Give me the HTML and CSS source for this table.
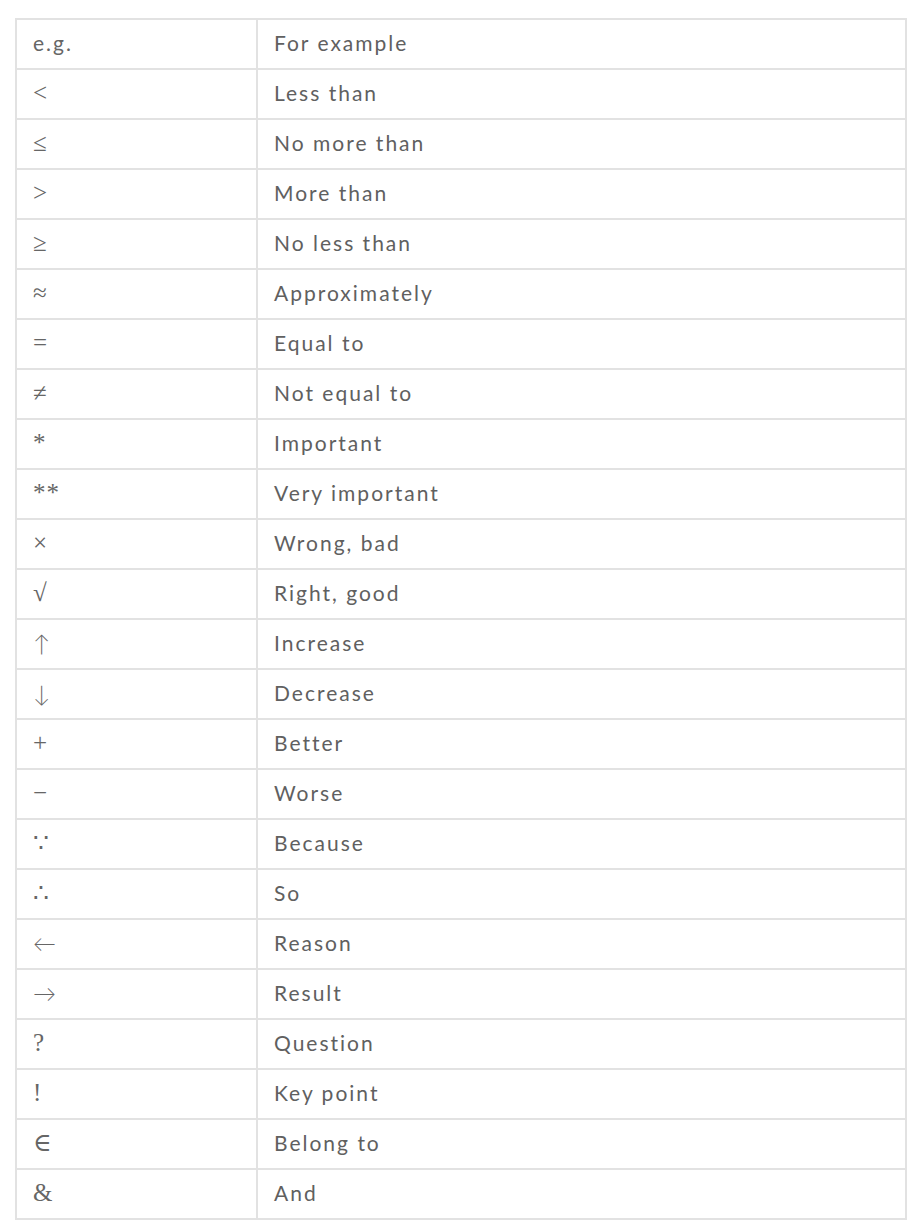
FILE: index.html
```html
<!DOCTYPE html>
<html>
<head>
<meta charset="utf-8">
<link rel="stylesheet" href="styles.css">
</head>
<body>
<table class="symbols">
<tr><td class="sym sym-text">e.g.</td><td class="mean">For example</td></tr>
<tr><td class="sym">&lt;</td><td class="mean">Less than</td></tr>
<tr><td class="sym">≤</td><td class="mean">No more than</td></tr>
<tr><td class="sym">&gt;</td><td class="mean">More than</td></tr>
<tr><td class="sym">≥</td><td class="mean">No less than</td></tr>
<tr><td class="sym">≈</td><td class="mean">Approximately</td></tr>
<tr><td class="sym">=</td><td class="mean">Equal to</td></tr>
<tr><td class="sym">≠</td><td class="mean">Not equal to</td></tr>
<tr><td class="sym">*</td><td class="mean">Important</td></tr>
<tr><td class="sym">**</td><td class="mean">Very important</td></tr>
<tr><td class="sym">×</td><td class="mean">Wrong, bad</td></tr>
<tr><td class="sym">√</td><td class="mean">Right, good</td></tr>
<tr><td class="sym sym-arrow">↑</td><td class="mean">Increase</td></tr>
<tr><td class="sym sym-arrow">↓</td><td class="mean">Decrease</td></tr>
<tr><td class="sym">+</td><td class="mean">Better</td></tr>
<tr><td class="sym">−</td><td class="mean">Worse</td></tr>
<tr><td class="sym">∵</td><td class="mean">Because</td></tr>
<tr><td class="sym">∴</td><td class="mean">So</td></tr>
<tr><td class="sym sym-arrow">←</td><td class="mean">Reason</td></tr>
<tr><td class="sym sym-arrow">→</td><td class="mean">Result</td></tr>
<tr><td class="sym">?</td><td class="mean">Question</td></tr>
<tr><td class="sym">!</td><td class="mean">Key point</td></tr>
<tr><td class="sym">∈</td><td class="mean">Belong to</td></tr>
<tr><td class="sym">&amp;</td><td class="mean">And</td></tr>
</table>
</body>
</html>
```
FILE: styles.css
```css
html, body {
  margin: 0;
  background: #ffffff;
}
body {
  padding: 18px 15px 0 15px;
  font-family: "Lato", "Liberation Serif", "DejaVu Serif", sans-serif;
  color: #606060;
}
.symbols {
  width: 892px;
  border-collapse: collapse;
  border: 2px solid #e2e2e2;
}
.symbols td {
  border: 2px solid #e2e2e2;
  height: 45px;
  padding: 0 0 3px 16px;
  font-size: 21px;
  letter-spacing: 2px;
  vertical-align: middle;
}
.symbols .sym {
  width: 223px;
  color: #666;
  font-family: "Liberation Serif", "DejaVu Serif", serif;
  font-size: 25px;
  letter-spacing: 1px;
}
.symbols .sym-text {
  font-family: "Lato", sans-serif;
  font-size: 21px;
  letter-spacing: 2px;
}
.symbols .sym-arrow {
  font-family: "Lato", "DejaVu Sans", sans-serif;
  font-size: 23px;
  font-weight: 300;
}
```
